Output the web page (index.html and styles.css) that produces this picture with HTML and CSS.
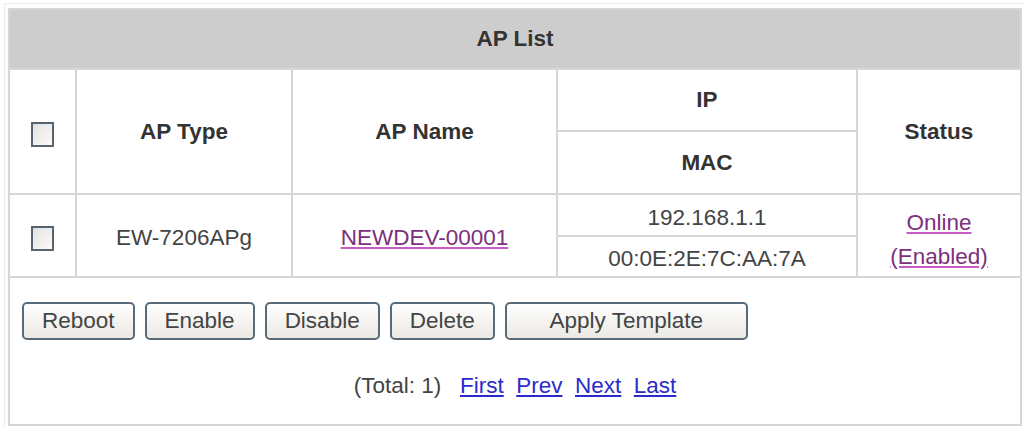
FILE: index.html
```html
<!DOCTYPE html>
<html lang="en">
<head>
    <meta charset="UTF-8">
    <title>AP List</title>
    <link rel="stylesheet" href="styles.css">
</head>
<body>
    <div class="frame">
        <table class="ap-list">
            <tr class="title-row">
                <th colspan="5" class="title">AP List</th>
            </tr>
            <tr class="head-ip">
                <th rowspan="2" class="col-check"><input type="checkbox" class="box"></th>
                <th rowspan="2" class="col-type">AP Type</th>
                <th rowspan="2" class="col-name">AP Name</th>
                <th class="col-addr">IP</th>
                <th rowspan="2" class="col-status">Status</th>
            </tr>
            <tr class="head-mac">
                <th>MAC</th>
            </tr>
            <tr class="data-ip">
                <td rowspan="2" class="lower"><input type="checkbox" class="box"></td>
                <td rowspan="2" class="lower">EW-7206APg</td>
                <td rowspan="2" class="lower"><a href="#" class="visited">NEWDEV-00001</a></td>
                <td class="lower">192.168.1.1</td>
                <td rowspan="2" class="status"><a href="#" class="visited">Online<br>(Enabled)</a></td>
            </tr>
            <tr class="data-mac">
                <td class="lower">00:0E:2E:7C:AA:7A</td>
            </tr>
            <tr class="foot-row">
                <td colspan="5" class="foot">
                    <div class="actions">
                        <button class="btn">Reboot</button>
                        <button class="btn">Enable</button>
                        <button class="btn">Disable</button>
                        <button class="btn">Delete</button>
                        <button class="btn btn-wide">Apply Template</button>
                    </div>
                    <p class="pager">
                        (Total: 1)&nbsp;&nbsp;&nbsp;<a href="#">First</a>&nbsp;&nbsp;<a href="#">Prev</a>&nbsp;&nbsp;<a href="#">Next</a>&nbsp;&nbsp;<a href="#">Last</a>
                    </p>
                </td>
            </tr>
        </table>
    </div>
</body>
</html>
```

FILE: styles.css
```css
body {
    margin: 0;
    background: #fff;
    font-family: "Liberation Sans", Arial, sans-serif;
    font-size: 22.5px;
    color: #444;
}

.frame {
    margin: 3px 0 0 4px;
    padding: 4px 0 0 3px;
    border-top: 1px solid #ececec;
    border-left: 1px solid #ececec;
}

.ap-list {
    width: 1014px;
    border-collapse: collapse;
    border: 2px solid #d6d6d6;
}

.ap-list th, .ap-list td {
    border: 2px solid #d6d6d6;
    padding: 0;
    text-align: center;
    vertical-align: middle;
}

.ap-list th {
    color: #333;
    font-weight: bold;
}

.title {
    background-color: #cdcdcd;
}

.title-row { height: 60px; }
.head-ip { height: 62px; }
.head-mac { height: 63px; }
.data-ip { height: 42px; }
.data-mac { height: 41px; }

.col-check { width: 65px; }
.col-type { width: 214px; }
.col-name { width: 263px; }
.col-addr { width: 298px; }

.ap-list .col-check,
.ap-list .lower {
    padding-top: 5px;
}

.box {
    appearance: none;
    -webkit-appearance: none;
    display: inline-block;
    width: 23px;
    height: 25px;
    margin: 0;
    border: 2px solid #57636e;
    background: linear-gradient(135deg, #e2e2e0, #fbfbfb);
    vertical-align: middle;
}

a {
    color: #2b2bcc;
}

a.visited {
    color: #7d2f7d;
    text-decoration-color: #c45cc4;
}

.ap-list .status {
    padding-top: 8px;
    line-height: 34px;
}

.ap-list td.foot {
    height: 146px;
    text-align: left;
    vertical-align: top;
}

.actions {
    display: flex;
    gap: 10px;
    padding: 24px 0 0 12px;
}

.btn {
    height: 38px;
    padding: 0 18px;
    font-family: "Liberation Sans", Arial, sans-serif;
    font-size: 22.5px;
    color: #444;
    background: linear-gradient(#fefefe, #ebe9e3);
    border: 2px solid #596a7a;
    border-radius: 5px;
}

.btn-wide {
    width: 243px;
}

.pager {
    margin: 33px 0 0;
    text-align: center;
}
```
